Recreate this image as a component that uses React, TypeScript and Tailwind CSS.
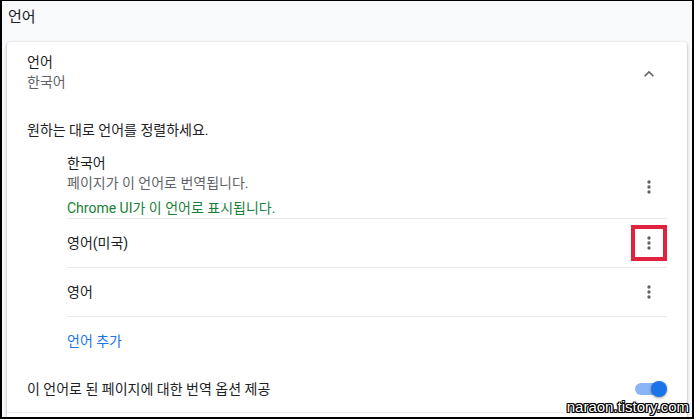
import React from "react";

const MoreVert = () => (
  <svg width="20" height="20" viewBox="0 0 24 24" fill="#5f6368">
    <circle cx="12" cy="6" r="2" />
    <circle cx="12" cy="12" r="2" />
    <circle cx="12" cy="18" r="2" />
  </svg>
);

const ExpandLess = () => (
  <svg width="20" height="20" viewBox="0 0 24 24" fill="#5f6368">
    <path d="M12 8l-6 6 1.41 1.41L12 10.83l4.59 4.58L18 14z" />
  </svg>
);

function LangRow({ name, highlight }: { name: string; highlight?: boolean }) {
  return (
    <div className="flex items-center justify-between h-[49px] border-t border-[#e8eaed]">
      <span className="text-[#202124]">{name}</span>
      <button
        className={`w-[36px] h-[36px] flex items-center justify-center ${
          highlight ? "border-4 border-[#e0243f]" : ""
        }`}
      >
        <MoreVert />
      </button>
    </div>
  );
}

export default function App() {
  return (
    <div className="relative w-[694px] h-[419px] overflow-hidden bg-[#f8f9fa] border-black border-x-2 border-b-2 border-t font-['Roboto','Noto_Sans_CJK_KR',sans-serif] text-[14px] leading-[20px] text-[#202124]">
      <div className="h-[41px] pl-[6px] pt-[6px] text-[15px]">언어</div>

      <div className="mx-[5px] bg-white rounded-[4px] shadow-[0_1px_2px_0_rgba(60,64,67,0.3),0_1px_3px_1px_rgba(60,64,67,0.15)]">
        <div className="px-[20px]">
          <div className="flex items-center justify-between py-[10px]">
            <div>
              <div>언어</div>
              <div className="text-[#5f6368]">한국어</div>
            </div>
            <button className="w-[36px] h-[36px] flex items-center justify-center mt-[3px]">
              <ExpandLess />
            </button>
          </div>

          <div className="mt-[18px]">원하는 대로 언어를 정렬하세요.</div>

          <div className="ml-[40px] mt-[13px]">
            <div className="flex items-center justify-between">
              <div>
                <div>한국어</div>
                <div className="text-[#5f6368]">페이지가 이 언어로 번역됩니다.</div>
                <div className="mt-[5px] text-[#188038]">Chrome UI가 이 언어로 표시됩니다.</div>
              </div>
              <button className="w-[36px] h-[36px] flex items-center justify-center mt-[3px]">
                <MoreVert />
              </button>
            </div>
            <LangRow name="영어(미국)" highlight />
            <LangRow name="영어" />
            <div className="flex items-center h-[49px] border-t border-[#e8eaed] text-[#1a73e8]">
              언어 추가
            </div>
          </div>

          <div className="flex items-center justify-between h-[47px]">
            <span>이 언어로 된 페이지에 대한 번역 옵션 제공</span>
            <div className="relative w-[32px] h-[16px] flex items-center">
              <div className="w-[28px] h-[12px] rounded-full bg-[#8ab4f8]" />
              <div className="absolute right-0 top-0 w-[16px] h-[16px] rounded-full bg-[#1a73e8] shadow-[0_1px_3px_rgba(0,0,0,0.4)]" />
            </div>
          </div>
        </div>
        <div className="border-t border-[#e8eaed] h-[20px]" />
      </div>

      <div className="absolute right-[3px] bottom-[1px] font-['Liberation_Sans',sans-serif] text-[15px] leading-[18px] text-white [text-shadow:-1px_-1px_0_#000,1px_-1px_0_#000,-1px_1px_0_#000,1px_1px_0_#000,0_1px_0_#000,0_-1px_0_#000,1px_0_0_#000,-1px_0_0_#000]">
        naraon.tistory.com
      </div>
    </div>
  );
}
